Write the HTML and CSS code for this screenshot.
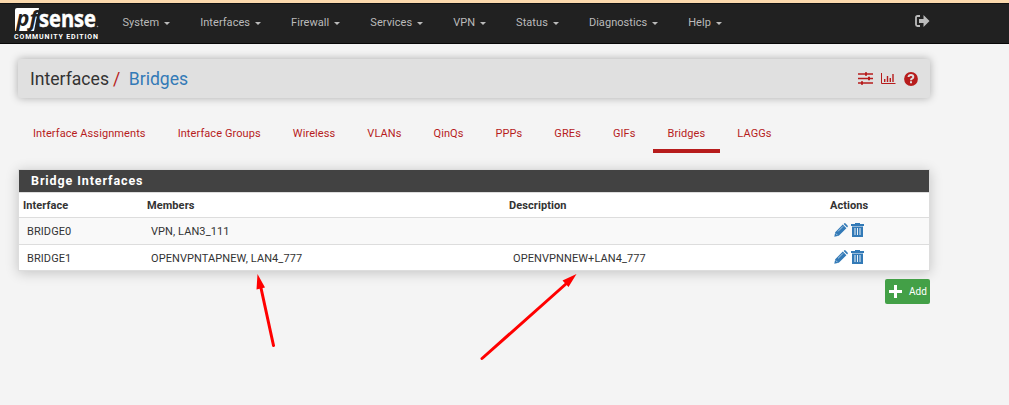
FILE: index.html
```html
<!DOCTYPE html>
<html lang="en">
<head>
<meta charset="utf-8">
<title>Interfaces: Bridges</title>
<link rel="stylesheet" href="styles.css">
</head>
<body>
<svg class="defs" width="0" height="0">
  <symbol id="pencil" viewBox="0 0 14 14"><path fill="currentColor" d="M.3 13.7 1.2 9.2 8.8 1.6 12.4 5.2 4.8 12.8Z M9.6.9 10.1.4Q10.8-.2 11.6.5L13.5 2.4Q14.2 3.1 13.5 3.9L13.1 4.4Z"/><path stroke="#fff" stroke-width=".6" d="M4 8.400 9 3.4M1.7 10.4 3.6 12.3" fill="none"/></symbol>
  <symbol id="trash" viewBox="0 0 13 14"><path fill="currentColor" d="M0 1H4V0H9V1H13V3H0ZM1 3.6H12V14H1Z"/><path stroke="#fff" stroke-width=".9" d="M4 5V12M6.500 5V12M9 5V12"/></symbol>
</svg>
<nav class="navbar">
  <a class="brand">
    <svg width="86" height="34" viewBox="0 0 86 34">
      <path fill="#fff" d="M3 0H25L24 5 22.500 10 20 23H1V2Q1 0 3 0Z"/>
      <text class="logo-pf" x="2.500" y="18" textLength="21" lengthAdjust="spacingAndGlyphs">pf</text>
      <text class="logo-sense" x="25" y="18.500" textLength="57" lengthAdjust="spacingAndGlyphs">sense</text>
      <circle cx="83.500" cy="18.500" r=".8" fill="#999"/>
      <text class="logo-edition" x="0" y="30.500" textLength="84">COMMUNITY EDITION</text>
    </svg>
  </a>
  <ul class="menu">
    <li>System<i class="caret"></i></li><li>Interfaces<i class="caret"></i></li><li>Firewall<i class="caret"></i></li><li>Services<i class="caret"></i></li><li>VPN<i class="caret"></i></li><li>Status<i class="caret"></i></li><li>Diagnostics<i class="caret"></i></li><li>Help<i class="caret"></i></li>
  </ul>
  <svg class="logout" width="15" height="12" viewBox="0 0 15 12"><path d="M5 1H2.500Q1 1 1 2.500V9.500Q1 11 2.500 11H5" fill="none" stroke="#bbb" stroke-width="1.800"/><path fill="#bbb" d="M4 4H8.500V0L14.500 6 8.500 12V8H4Z"/></svg>
</nav>
<main class="container">
  <header class="page-header">
    <h1>Interfaces<span class="slash">/</span><a>Bridges</a></h1>
    <div class="shortcuts">
      <svg width="15" height="13" viewBox="0 0 15 13"><path stroke="#b71c1c" stroke-width="1.700" d="M0 2H15M0 6.500H15M0 11H15"/><path stroke="#b71c1c" stroke-width="2" d="M8 .2V3.800M11 4.700V8.300M4 9.200V12.800"/></svg>
      <svg width="15" height="12" viewBox="0 0 15 12"><path fill="none" stroke="#b71c1c" d="M.5 0V10.500H14.500"/><path stroke="#b71c1c" stroke-width="1.400" d="M3.700 9V6M6.500 9V3M9.300 9V5M12 9V1"/></svg>
      <svg width="14" height="14" viewBox="0 0 14 14"><circle cx="7" cy="7" r="6.900" fill="#b71c1c"/><path d="M4.500 5Q4.700 3 7 3 9.300 3 9.300 5 9.300 6 8 6.700 7 7.200 7 8.300" fill="none" stroke="#e0e0e0" stroke-width="2"/><path fill="#e0e0e0" d="M6 9.300H8V11.300H6Z"/></svg>
    </div>
  </header>
  <ul class="tabs">
    <li>Interface Assignments</li><li>Interface Groups</li><li>Wireless</li><li>VLANs</li><li>QinQs</li><li>PPPs</li><li>GREs</li><li>GIFs</li><li class="active">Bridges</li><li>LAGGs</li>
  </ul>
  <section class="panel">
    <h2>Bridge Interfaces</h2>
    <div class="row head"><b>Interface</b><b>Members</b><b>Description</b><b>Actions</b></div>
    <div class="row striped"><span>BRIDGE0</span><span>VPN, LAN3_111</span><span></span><span class="actions"><svg width="14" height="14"><use href="#pencil"/></svg><svg width="13" height="14"><use href="#trash"/></svg></span></div>
    <div class="row last"><span>BRIDGE1</span><span>OPENVPNTAPNEW, LAN4_777</span><span>OPENVPNNEW+LAN4_777</span><span class="actions"><svg width="14" height="14"><use href="#pencil"/></svg><svg width="13" height="14"><use href="#trash"/></svg></span></div>
  </section>
  <div class="footer-actions"><a class="add"><svg width="13" height="13" viewBox="0 0 13 13"><path stroke="#fff" stroke-width="3" d="M6.500 0V13M0 6.500H13"/></svg>Add</a></div>
</main>
<svg class="annotations" width="1009" height="405" viewBox="0 0 1009 405">
  <path stroke="#f00" stroke-width="3" stroke-linecap="round" d="M273.500 345.500 261 288M482 358.500 567 283"/>
  <path fill="#f00" d="M257.500 274 265 287.500 256.500 289.500ZM576.500 274 568.500 287 562.500 280.500Z"/>
</svg>
</body>
</html>
```
FILE: styles.css
```css
* { box-sizing: border-box; }
body { margin: 0; height: 405px; overflow: hidden; background: #f4f4f4; color: #333; font: 11px/16px Roboto, sans-serif; letter-spacing: .08px; }
ul { list-style: none; margin: 0; padding: 0; display: flex; }
svg { display: block; }
.defs { position: absolute; }
.navbar { height: 44px; border-top: 3px solid #fbd9ad; border-bottom: 1px solid #080808; background: #212121; display: flex; align-items: flex-start; box-shadow: inset 0 1px #111; }
.brand { padding: 5px 0 0 14px; width: 107.400px; }
.brand svg { overflow: visible; }
.logo-pf { font: italic 700 22px "Open Sans", sans-serif; fill: #212121; letter-spacing: 0; }
.logo-sense { font: 700 23px "Open Sans", sans-serif; fill: #fff; stroke: #fff; stroke-width: .5px; letter-spacing: 0; }
.logo-edition { font: 700 7px Roboto, sans-serif; fill: #fff; letter-spacing: 0; }
.menu { flex: 1; color: #bbb; padding-top: 12px; letter-spacing: .05px; }
.menu li { padding: 0 15px; display: flex; align-items: center; }
.caret { margin: 1px 0 0 5px; border: 3px solid transparent; border-top-color: #bbb; border-bottom: 0; }
.logout { margin: 12px 79px 0 0; }
.container { width: 912px; margin-left: 18px; padding-top: 15px; }
.page-header { height: 39px; background: #e0e0e0; border-radius: 3px; box-shadow: 0 0 8px rgba(0,0,0,.3); padding: 0 12px; display: flex; align-items: center; justify-content: space-between; }
h1 { margin: 0; font: 400 17.600px/24px Roboto, sans-serif; letter-spacing: 0; }
h1 a { color: #337ab7; }
.slash { color: #b71c1c; margin: 0 8.500px 0 4px; }
.shortcuts { display: flex; align-items: center; gap: 8px; }
.tabs { gap: 2px; margin-top: 22px; height: 34px; color: #b71c1c; letter-spacing: .09px; }
.tabs li { height: 33px; padding: 6px 15px 0; border-bottom: 4px solid transparent; }
.tabs .active { border-bottom-color: #b71c1c; }
.panel { margin-top: 15px; border: 1px solid #ddd; background: #fff; box-shadow: 0 2px 12px rgba(0,0,0,.2); }
h2 { margin: 0; height: 22px; padding-left: 12px; background: #424242; color: #fff; font: 700 12.500px/22px Roboto, sans-serif; letter-spacing: .9px; }
.row { display: grid; grid-template-columns: 124px 362px 321px 1fr; height: 27px; align-items: center; border-top: 1px solid #ddd; padding: 1px 0 0 8px; }
.head { height: 25px; padding: 2px 0 0 4px; }
.last { height: 26px; padding-top: 2px; }
.striped { background: #f9f9f9; }
.actions { display: flex; gap: 3px; color: #337ab7; margin-top: -3px; }
.footer-actions { display: flex; justify-content: flex-end; margin-top: 8px; }
.add { display: flex; align-items: center; gap: 7px; width: 45px; height: 25px; padding-left: 4px; background: #43a047; color: #fff; border-radius: 2px; font-size: 10px; }
.annotations { position: absolute; left: 0; top: 0; pointer-events: none; }
```
